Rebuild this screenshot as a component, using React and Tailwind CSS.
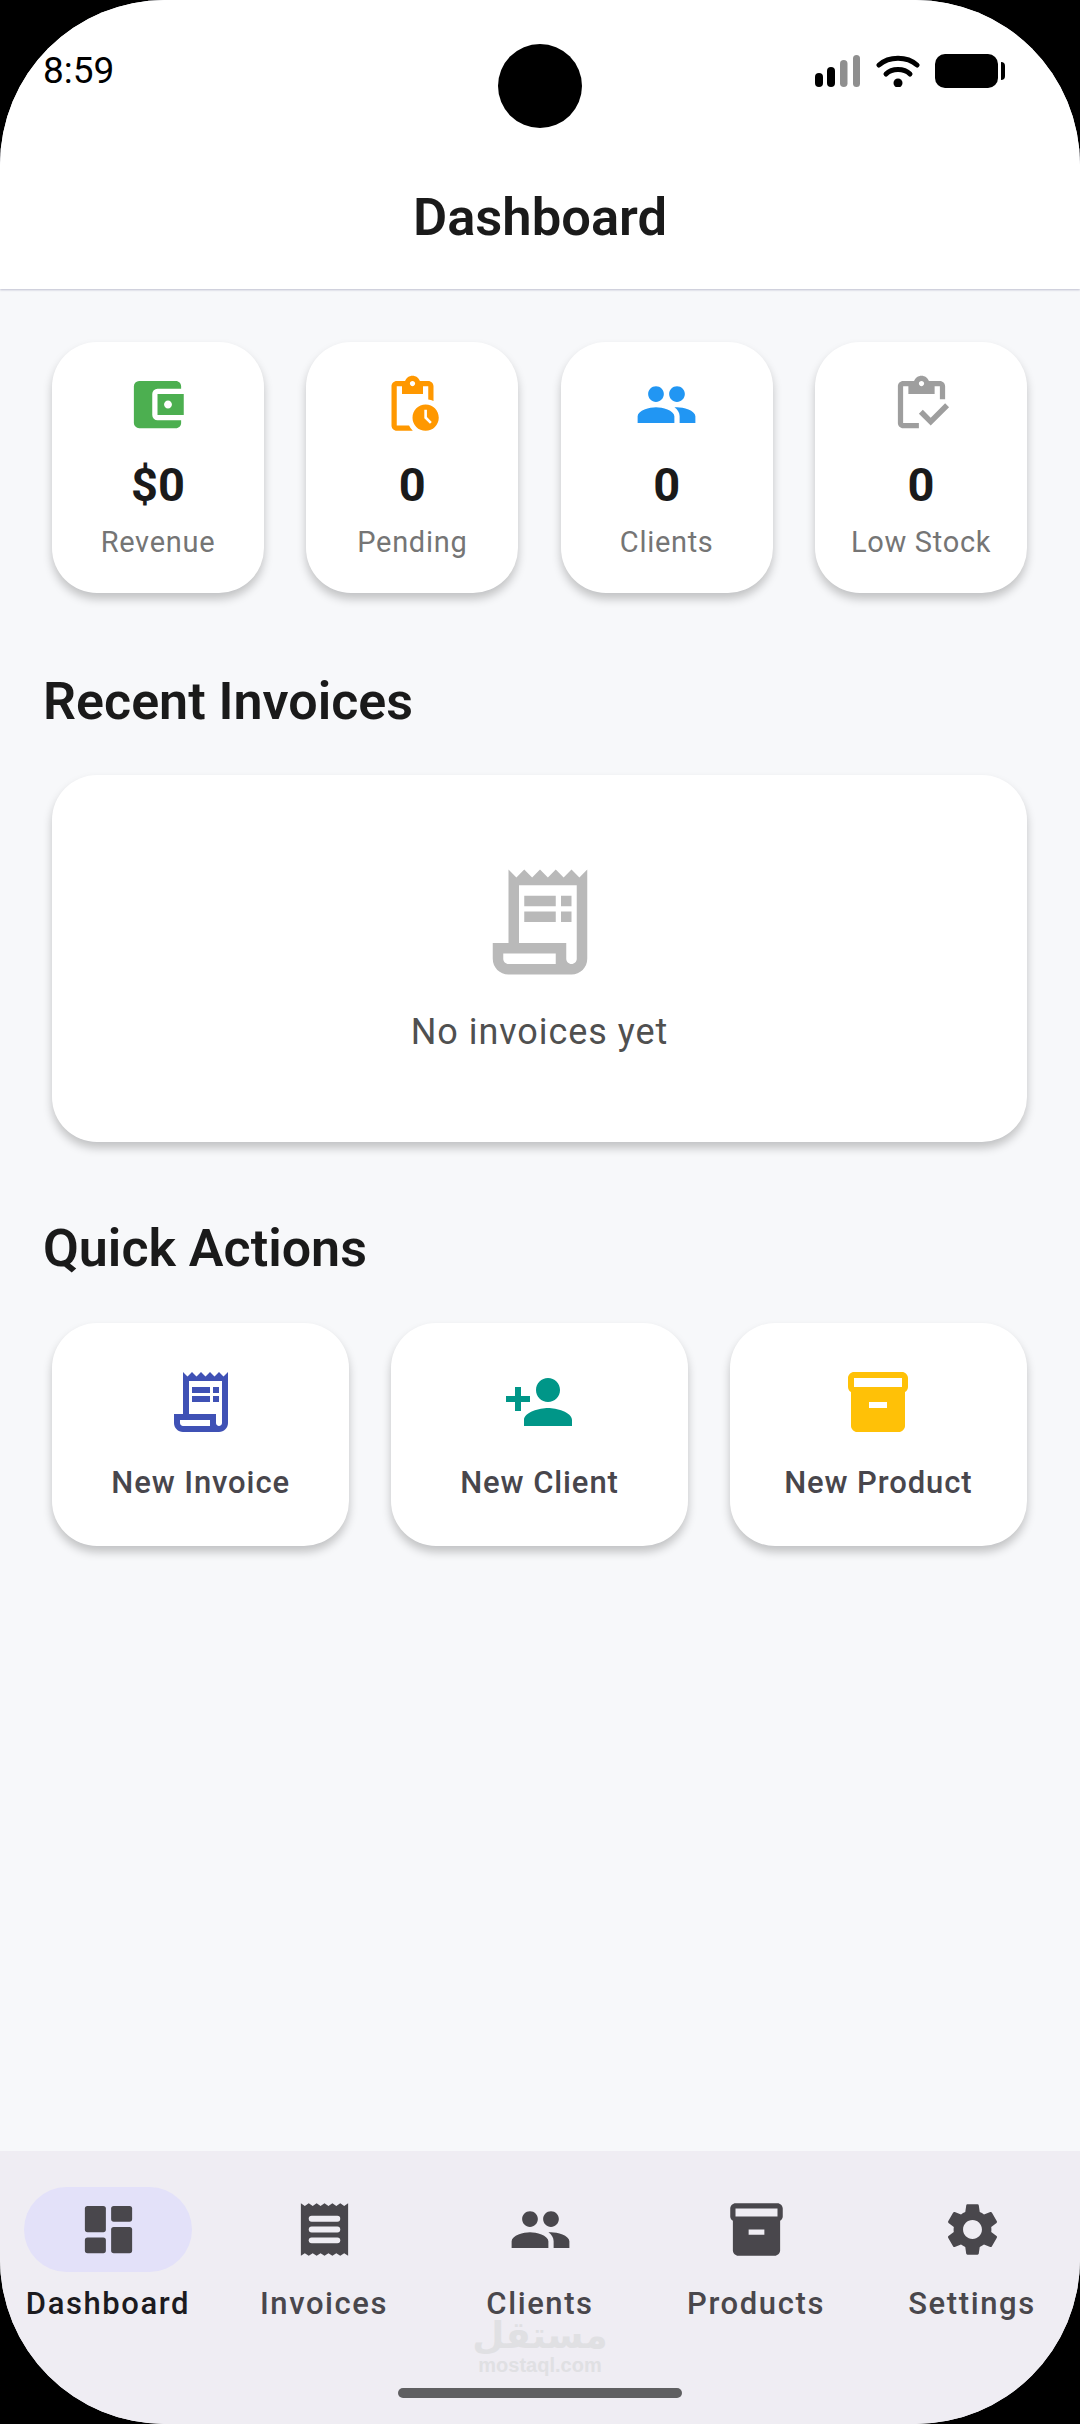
import React from "react";
import {
  MdAccountBalanceWallet,
  MdPendingActions,
  MdPeople,
  MdOutlineInventory,
  MdOutlineReceiptLong,
  MdPersonAdd,
  MdInventory2,
  MdSettings,
} from "react-icons/md";

const stats = [
  { icon: MdAccountBalanceWallet, color: "text-[#4caf50]", value: "$0", label: "Revenue" },
  { icon: MdPendingActions, color: "text-[#ff9800]", value: "0", label: "Pending" },
  { icon: MdPeople, color: "text-[#2196f3]", value: "0", label: "Clients" },
  { icon: MdOutlineInventory, color: "text-[#9e9e9e]", value: "0", label: "Low Stock" },
];

const actions = [
  { icon: MdOutlineReceiptLong, color: "text-[#3f51b5]", label: "New Invoice" },
  { icon: MdPersonAdd, color: "text-[#009688]", label: "New Client" },
  { icon: MdInventory2, color: "text-[#ffc107]", label: "New Product" },
];

// rounded variants, the icon package only has the sharp ones
function DashboardIcon({ size, className }) {
  return (
    <svg width={size} height={size} viewBox="0 0 24 24" fill="currentColor" className={className}>
      <rect x="3" y="3" width="8" height="10" rx="1" />
      <rect x="3" y="15" width="8" height="6" rx="1" />
      <rect x="13" y="3" width="8" height="6" rx="1" />
      <rect x="13" y="11" width="8" height="10" rx="1" />
    </svg>
  );
}

function ReceiptIcon({ size, className }) {
  return (
    <svg width={size} height={size} viewBox="0 0 24 24" fill="currentColor" className={className}>
      <path d="M3 2l1.5 1L6 2l1.5 1L9 2l1.5 1L12 2l1.5 1L15 2l1.5 1L18 2l1.5 1L21 2v20l-1.5-1-1.5 1-1.5-1-1.5 1-1.5-1-1.5 1-1.5-1L9 22l-1.5-1L6 22l-1.5-1L3 22z" />
      <rect x="6" y="6.8" width="12" height="2.2" rx="1.1" fill="#efedf3" />
      <rect x="6" y="10.9" width="12" height="2.2" rx="1.1" fill="#efedf3" />
      <rect x="6" y="15" width="12" height="2.2" rx="1.1" fill="#efedf3" />
    </svg>
  );
}

const tabs = [
  { icon: DashboardIcon, label: "Dashboard", active: true },
  { icon: ReceiptIcon, label: "Invoices" },
  { icon: MdPeople, label: "Clients" },
  { icon: MdInventory2, label: "Products" },
  { icon: MdSettings, label: "Settings" },
];

function StatusIcons() {
  return (
    <div className="flex items-center">
      <svg width="45" height="32" viewBox="0 0 45 32">
        <rect x="0" y="18" width="8" height="14" rx="4" fill="#000" />
        <rect x="12" y="12" width="8" height="20" rx="4" fill="#000" />
        <rect x="25" y="5" width="7.5" height="27" rx="3.75" fill="#8f8f8f" />
        <rect x="38" y="0" width="7" height="32" rx="3.5" fill="#8f8f8f" />
      </svg>
      <svg width="44" height="32" viewBox="0 0 44 32" className="ml-4" fill="none" stroke="#000" strokeWidth="5" strokeLinecap="round">
        <path d="M3 10 C13 1 31 1 41 10" />
        <path d="M10 19 C16 13 28 13 34 19" />
        <circle cx="22" cy="28" r="4.5" fill="#000" stroke="none" />
      </svg>
      <div className="ml-[15px] w-[63px] h-[34px] rounded-[10px] bg-black" />
      <div className="ml-[3px] w-1 h-[18px] rounded-r-sm bg-black" />
    </div>
  );
}

export default function App() {
  return (
    <div className="bg-black h-[2424px] w-[1080px] font-['Roboto',sans-serif]">
      <div className="relative h-full flex flex-col overflow-hidden rounded-[165px] bg-[#f7f8fa]">
        <header className="h-[289px] bg-white shadow-[0_1px_2px_rgba(60,60,110,0.3)] z-10">
          <div className="flex justify-between items-center pt-[50px] pl-[43px] pr-[75px]">
            <span className="text-[37px] leading-[40px] pt-px text-black">8:59</span>
            <StatusIcons />
          </div>
          <h1 className="mt-[96px] text-center text-[52.5px] leading-[60px] font-semibold text-[#1a1a1a]">
            Dashboard
          </h1>
        </header>

        {/* camera hole */}
        <div className="absolute left-[498px] top-[44px] w-[84px] h-[84px] rounded-full bg-black z-20" />

        <main className="flex-1 pt-[53px] px-[43px]">
          <div className="grid grid-cols-4 gap-[42.5px] ml-[9px] mr-[10px]">
            {stats.map((s) => (
              <div
                key={s.label}
                className="flex flex-col items-center bg-white rounded-[45px] pt-[31px] pb-[34px] shadow-[0_6px_10px_rgba(0,0,0,0.22)]"
              >
                <s.icon size={63} className={s.color} />
                <div className="mt-[22px] text-[47px] leading-[54px] font-bold text-[#1a1a1a]">{s.value}</div>
                <div className="mt-[13px] text-[29px] leading-[34px] tracking-[0.7px] text-[#757575]">{s.label}</div>
              </div>
            ))}
          </div>

          <h2 className="mt-[79px] mb-[-1px] text-[52px] leading-[60px] font-semibold text-[#1a1a1a]">Recent Invoices</h2>
          <div className="mt-[44px] ml-[9px] mr-[10px] flex flex-col items-center bg-white rounded-[45px] pt-[84px] pb-[88px] shadow-[0_6px_10px_rgba(0,0,0,0.22)]">
            <MdOutlineReceiptLong size={126} className="text-[#b9b9b9]" />
            <p className="mt-[25px] text-[36px] leading-[44px] tracking-[0.95px] text-[#505050]">No invoices yet</p>
          </div>

          <h2 className="mt-[77px] mb-[-1px] text-[52px] leading-[60px] font-semibold text-[#1a1a1a]">Quick Actions</h2>
          <div className="mt-[45px] ml-[9px] mr-[10px] grid grid-cols-3 gap-[41.5px]">
            {actions.map((a) => (
              <div
                key={a.label}
                className="flex flex-col items-center bg-white rounded-[45px] pt-[43px] pb-[43px] shadow-[0_6px_10px_rgba(0,0,0,0.22)]"
              >
                <a.icon size={72} className={a.color} />
                <div className="mt-[25px] text-[31px] leading-[40px] font-[480] tracking-[0.9px] text-[#48464c]">{a.label}</div>
              </div>
            ))}
          </div>
        </main>

        <nav className="relative h-[273px] bg-[#efedf3] pt-[36px]">
          <div className="grid grid-cols-5">
            {tabs.map((t) => (
              <div key={t.label} className="flex flex-col items-center">
                <div
                  className={
                    t.active
                      ? "flex items-center justify-center w-[168px] h-[85px] rounded-full bg-[#e3e1f9]"
                      : "flex items-center justify-center w-[120px] h-[85px]"
                  }
                >
                  <t.icon size={63} className="text-[#49474c]" />
                </div>
                <div
                  className={
                    t.active
                      ? "mt-[16px] text-[31px] leading-[32px] font-[480] tracking-[1.6px] text-[#1c1b1f]"
                      : "mt-[16px] text-[31px] leading-[32px] font-[480] tracking-[1.6px] text-[#49474c]"
                  }
                >
                  {t.label}
                </div>
              </div>
            ))}
          </div>
          <div className="mt-[68px] mx-auto w-[284px] h-[10px] rounded-full bg-[#5f5f61]" />

          {/* watermark */}
          <div className="absolute left-[440px] top-[168px] w-[200px] flex flex-col items-center text-[#e0e0e3] pointer-events-none">
            <span className="font-['DejaVu_Sans',sans-serif] font-bold text-[37px] leading-[34px]">مستقل</span>
            <span className="font-['Liberation_Sans',sans-serif] font-bold text-[20px] leading-[24px]">mostaql.com</span>
          </div>
        </nav>
      </div>
    </div>
  );
}
